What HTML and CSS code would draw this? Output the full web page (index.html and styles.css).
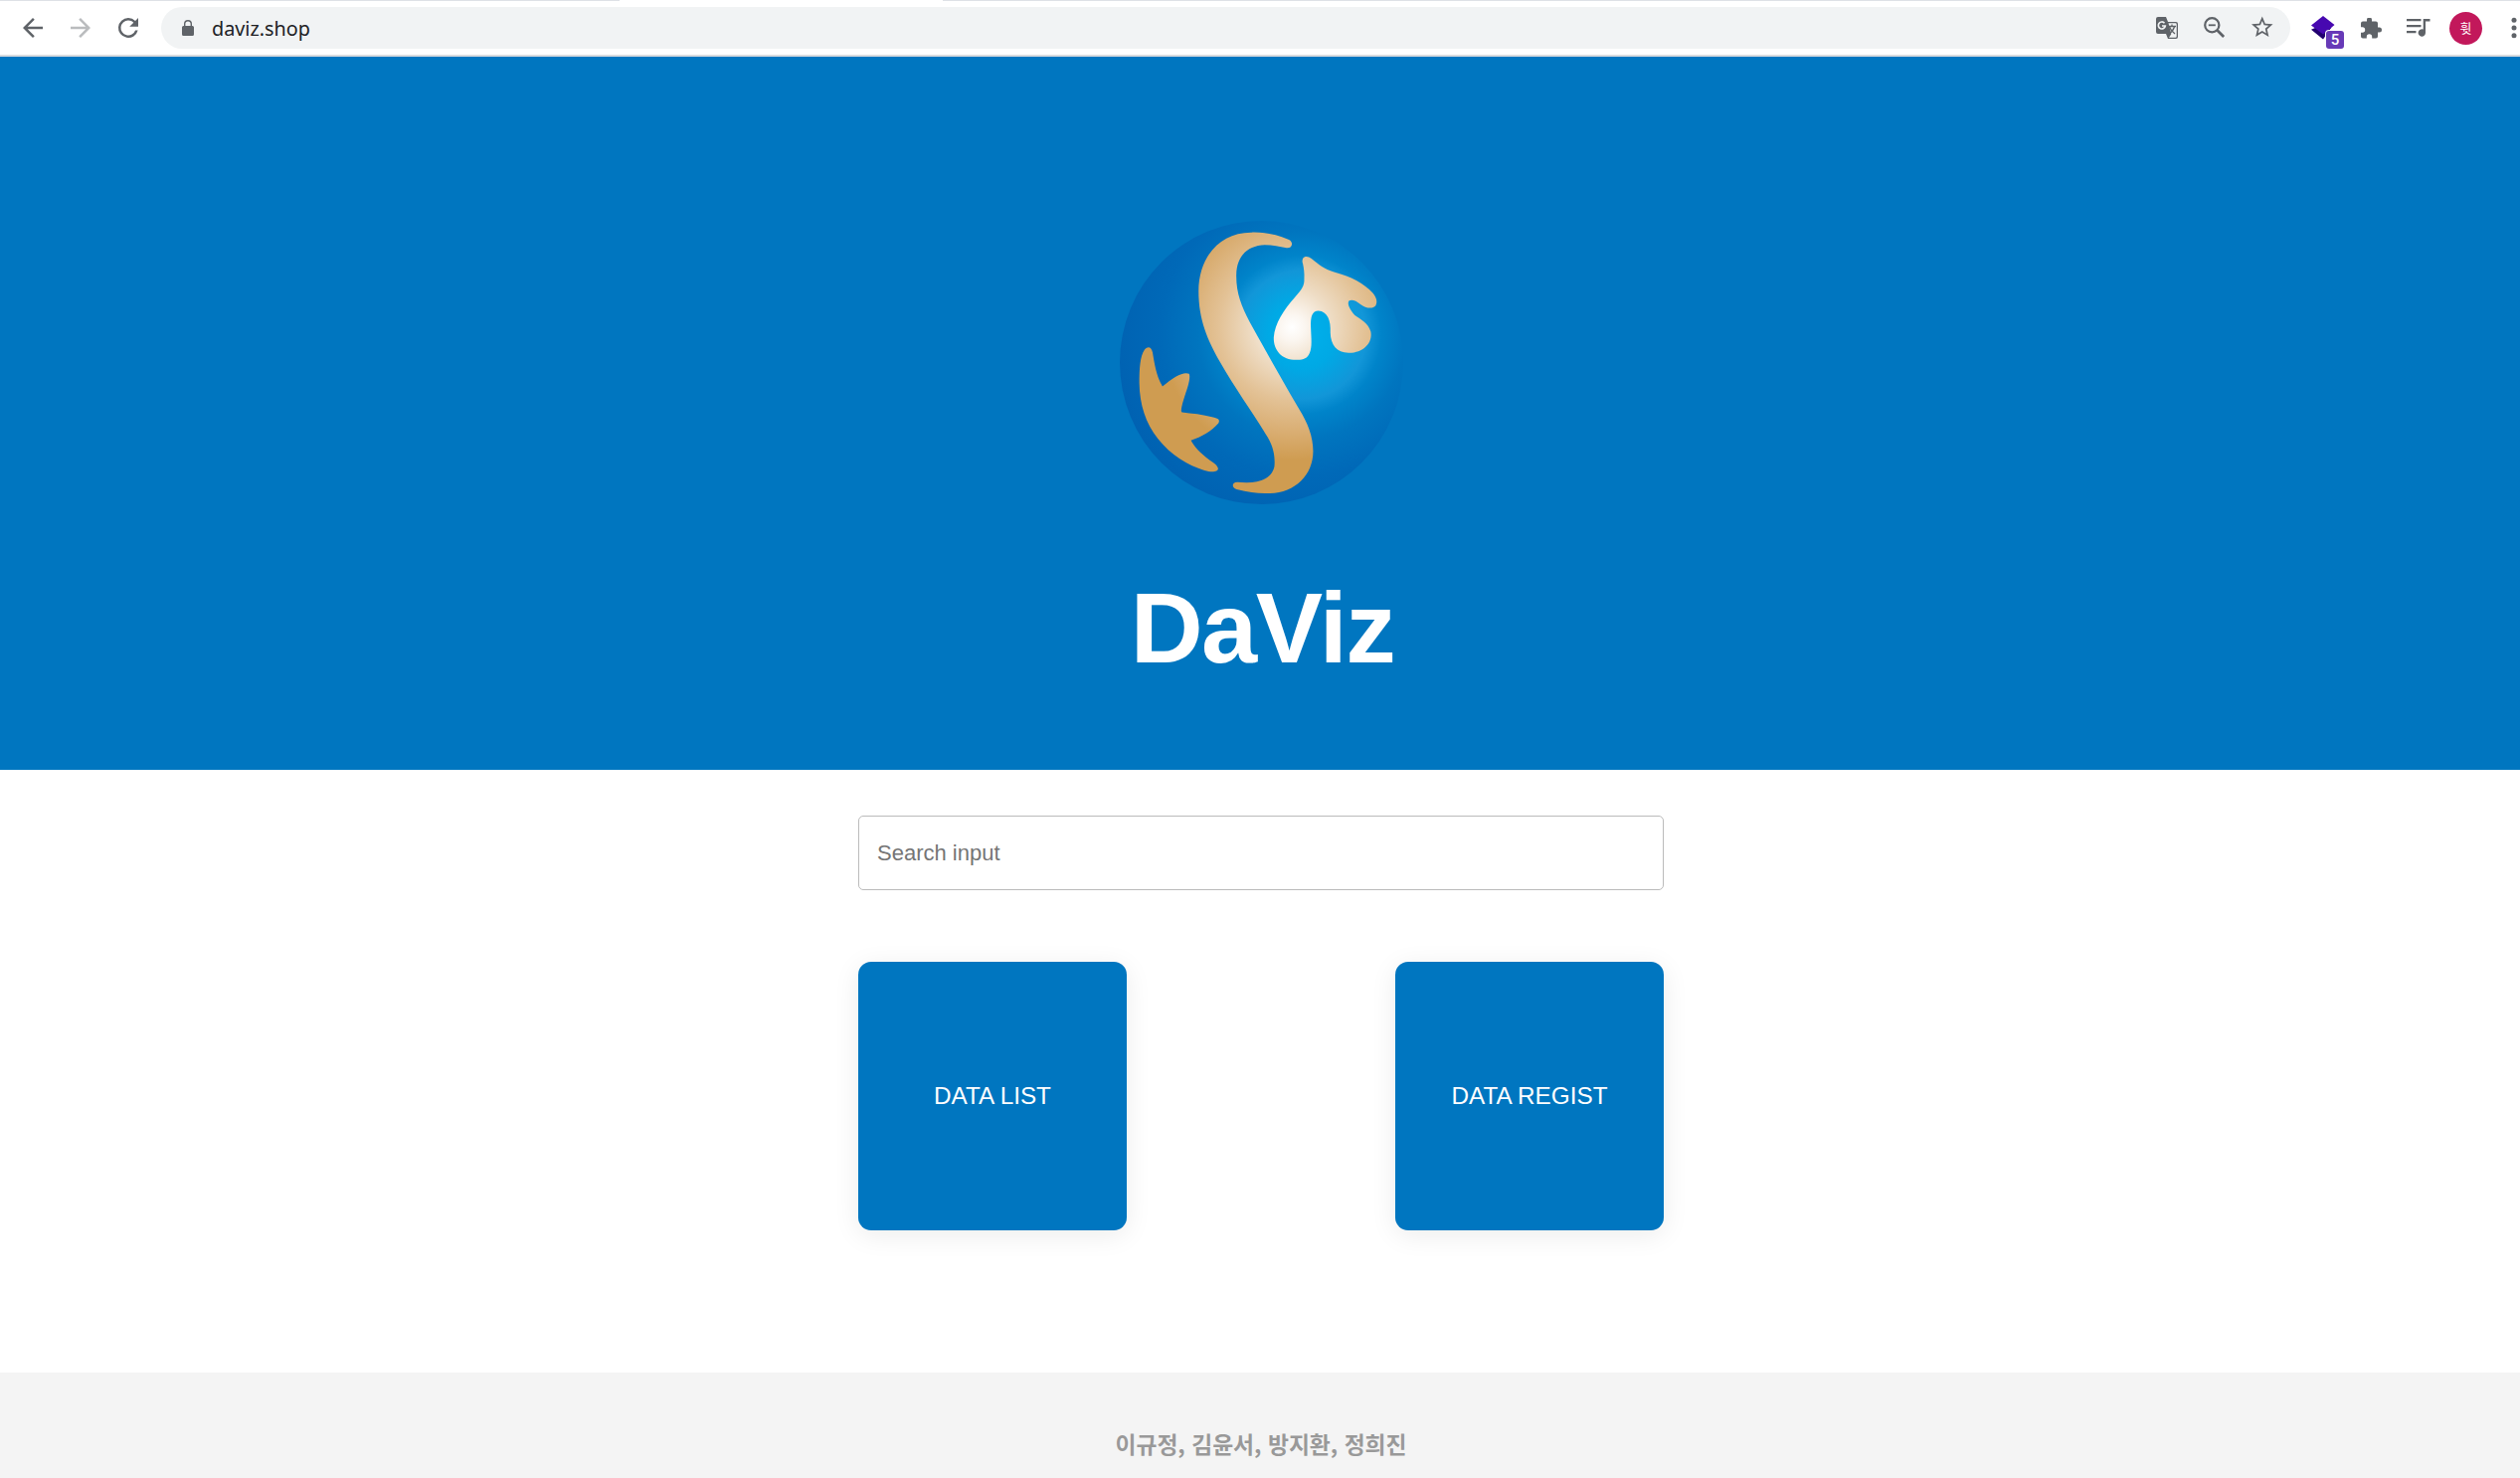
FILE: index.html
```html
<!DOCTYPE html>
<html lang="ko">
<head>
<meta charset="utf-8">
<title>DaViz</title>
<link rel="stylesheet" href="styles.css">
</head>
<body>
<header class="toolbar">
  <svg class="icon" viewBox="0 0 24 24"><path d="M20 11H7.83l5.59-5.59L12 4l-8 8 8 8 1.41-1.41L7.83 13H20z"/></svg>
  <svg class="icon icon-off" viewBox="0 0 24 24"><path d="M12 4l-1.41 1.41L16.17 11H4v2h12.17l-5.58 5.59L12 20l8-8z"/></svg>
  <svg class="icon" viewBox="0 0 24 24"><path d="M17.65 6.35A7.96 7.96 0 0 0 12 4a8 8 0 1 0 7.73 10h-2.08A6 6 0 1 1 12 6c1.66 0 3.14.69 4.22 1.78L13 11h7V4z"/></svg>
  <div class="address">
    <svg class="lock" viewBox="0 0 12 16"><path d="M1.500 6H2V4a4 4 0 0 1 8 0v2h.5Q12 6 12 7.500V14.500Q12 16 10.500 16h-9Q0 16 0 14.500v-7Q0 6 1.500 6zM3.400 6h5.200V4a2.600 2.600 0 0 0-5.200 0z"/></svg>
    <span class="url">daviz.shop</span>
    <svg class="icon" viewBox="0 0 30 30"><path d="M6 4h8l2 5h8q2 0 2 2v13q0 2-2 2h-8l-2-5H6q-2 0-2-2V6q0-2 2-2z"/><path fill="#f1f3f4" d="M16.500 10.300H23.500q1.200 0 1.200 1.200v12q0 1.200-1.200 1.200H17l2.300-3.500z"/><path fill="none" stroke="#f1f3f4" stroke-width="1.700" d="M12.500 10.200a3.500 3.500 0 1 0 .8 2.800H10"/><path fill="none" stroke="#5f6368" stroke-width="1.300" d="M16.500 13.500h7.500M20 11.500v2M17.500 14c1 3 3 5 5.500 7M22.500 14c-1 3-3 5.500-6 7.500"/></svg>
    <svg class="icon" viewBox="0 0 30 30"><g fill="none" stroke="#5f6368"><circle cx="12.300" cy="12.300" r="7.100" stroke-width="2.200"/><path stroke-width="2.800" d="M17.600 17.600l6.500 6.500"/><path stroke-width="1.800" d="M8.800 12.300h7"/></g></svg>
    <svg class="icon" viewBox="0 0 24 24"><path transform="translate(1.500 1.100) scale(.86)" d="M22 9.240l-7.190-.62L12 2 9.190 8.630 2 9.240l5.460 4.730L5.820 21 12 17.270 18.180 21l-1.630-7.030zM12 15.400l-3.760 2.270 1-4.280-3.320-2.880 4.380-.38L12 6.100l1.710 4.040 4.380.38-3.320 2.880 1 4.280z"/></svg>
  </div>
  <div class="ext">
    <svg viewBox="0 0 34 34" width="34" height="34"><path fill="#21006f" d="M1 18.800L5 17l16 0-8 11.500z"/><path fill="#4708b0" d="M13 5L24.500 14 20.500 17.500 13 23.500 1 14.500z"/></svg>
    <span class="count">5</span>
  </div>
  <svg class="puzzle" viewBox="2 1.500 21 21"><path d="M20.500 11H19V7a2 2 0 0 0-2-2h-4V3.500a2.500 2.500 0 0 0-5 0V5H4a2 2 0 0 0-2 2v3.800h1.500a2.700 2.700 0 0 1 0 5.400H2V20a2 2 0 0 0 2 2h3.800v-1.500a2.700 2.700 0 0 1 5.400 0V22H17a2 2 0 0 0 2-2v-4h1.500a2.500 2.500 0 0 0 0-5z"/></svg>
  <svg class="queue" viewBox="0 0 24 20"><path d="M0 1h14.500v2.300H0zM0 7h14.500v2.300H0zM0 13h9.500v2.300H0zM16.700 1H23.500v2.500H19V15a3.700 3.700 0 1 1-2.300-3.400z"/></svg>
  <span class="avatar">휫</span>
  <svg class="dots" viewBox="0 0 6 22"><circle cx="3" cy="3.200" r="2.500"/><circle cx="3" cy="11" r="2.500"/><circle cx="3" cy="18.800" r="2.500"/></svg>
</header>
<section class="hero">
  <svg class="logo" viewBox="48 50 856 856">
    <defs>
      <radialGradient id="ball" gradientUnits="userSpaceOnUse" cx="598" cy="394" r="570">
        <stop offset="0" stop-color="#00b1ec"/><stop offset=".18" stop-color="#00a9e5"/><stop offset=".34" stop-color="#1296d8"/><stop offset=".42" stop-color="#0084ca"/><stop offset=".55" stop-color="#0075bf"/><stop offset=".75" stop-color="#0069b8"/><stop offset="1" stop-color="#0062b2"/>
      </radialGradient>
      <radialGradient id="gold" gradientUnits="userSpaceOnUse" cx="568" cy="372" r="400">
        <stop offset="0" stop-color="#fff"/><stop offset=".1" stop-color="#fbf6f0"/><stop offset=".3" stop-color="#eedcc4"/><stop offset=".55" stop-color="#e3c296"/><stop offset=".8" stop-color="#d9ad71"/><stop offset="1" stop-color="#cf9c51"/>
      </radialGradient>
    </defs>
    <circle cx="476" cy="478" r="428" fill="url(#ball)"/>
    <g fill="url(#gold)">
      <path d="M557 106C520 91 485 84 446 85C350 84 286 160 286 262C286 350 314 412 350 475C400 562 450 630 495 704C515 738 517 770 515 792C507 827 473 846 403 839C386 839 385 857 401 861C440 871 470 874 502 873C578 871 632 817 632 746C632 700 615 660 590 619C540 535 490 445 440 355C415 308 399 267 400 213C401 157 433 125 486 123C510 123 530 128 552 132C570 134 574 112 557 106Z"/>
      <path d="M601 180C594 158 612 152 627 164C650 183 665 195 695 205C750 220 785 240 812 268C824 282 827 296 821 306C811 318 790 313 775 302C761 290 747 286 740 292C734 300 743 320 758 335C775 348 799 357 806 385C813 421 780 450 739 449C703 448 685 425 684 388C686 350 675 324 648 322C629 322 624 340 625 371C626 405 630 429 621 450C615 465 601 471 581 470C537 470 512 441 513 402C516 360 544 318 576 282C598 258 606 246 605 226C606 207 604 195 601 180Z"/>
      <path d="M147 447C143 430 133 428 123 439C109 458 107 498 107 540C108 605 126 660 163 708C201 757 255 789 304 804C327 811 345 808 345 798C344 789 332 781 320 773C290 751 272 731 263 713C295 702 326 684 346 661C352 651 345 646 330 643C298 634 265 632 236 628C230 626 237 600 247 570C257 545 262 518 257 512C242 504 212 520 177 550C157 516 153 480 147 447Z"/>
    </g>
  </svg>
  <h1 class="title">DaViz</h1>
</section>
<main class="content">
  <input class="search" type="text" placeholder="Search input">
  <nav class="cards">
    <a class="card">DATA LIST</a>
    <a class="card">DATA REGIST</a>
  </nav>
</main>
<footer class="footer">이규정, 김윤서, 방지환, 정희진</footer>
</body>
</html>
```
FILE: styles.css
```css
* { box-sizing: border-box; }
body {
  margin: 0;
  height: 1486px;
  overflow: hidden;
  display: flex;
  flex-direction: column;
  background: #fff;
  font-family: "Liberation Sans", "Noto Sans CJK KR", sans-serif;
}
svg { display: block; flex: none; }

.toolbar {
  flex: none;
  height: 57px;
  padding: 1px 0 0 18px;
  display: flex;
  align-items: center;
  border-bottom: 2px solid #d9dbdf;
  background: linear-gradient(90deg, #dee1e6 623px, #fff 623px 948px, #dee1e6 948px) 0 0 / 100% 1px no-repeat;
  fill: #5f6368;
}
.icon { width: 30px; height: 30px; margin-right: 18px; }
.icon-off { fill: #babcbe; }
.address {
  width: 2141px;
  height: 42px;
  padding-left: 21px;
  display: flex;
  align-items: center;
  border-radius: 21px;
  background: #f1f3f4;
}
.address .icon:last-child { margin-right: 13px; }
.lock { width: 12px; height: 16px; }
.url {
  flex: 1;
  margin: 2px 0 0 18px;
  color: #202124;
  font: 19.8px/28px "Noto Sans", sans-serif;
}
.ext { position: relative; width: 34px; height: 34px; margin: 0 17px 0 20px; }
.count {
  position: absolute;
  left: 16px;
  top: 20px;
  width: 18px;
  height: 18px;
  border-radius: 3px;
  background: #673ab7;
  box-shadow: 0 0 0 1px #fff;
  color: #fff;
  text-align: center;
  font: 500 15px/18px Roboto, sans-serif;
}
.puzzle { width: 21px; height: 21px; margin-right: 25px; }
.queue { width: 24px; height: 20px; margin-right: 19px; }
.avatar {
  flex: none;
  width: 33px;
  height: 33px;
  border-radius: 50%;
  background: #c2185b;
  color: #fff;
  text-align: center;
  font: 13px/32px "Noto Sans CJK KR", sans-serif;
}
.dots { width: 6px; height: 22px; margin-left: 29px; }

.hero {
  flex: none;
  height: 717px;
  padding: 165px 0 0 2px;
  display: flex;
  flex-direction: column;
  align-items: center;
  background: #0076c0;
}
.logo { width: 285px; height: 285px; }
.title {
  margin: 66px 0 0 3px;
  color: #fff;
  font-size: 101px;
  line-height: 116px;
  letter-spacing: -1.5px;
}

.content {
  flex: none;
  width: 812px;
  height: 606px;
  margin: 0 auto;
  padding: 46px 0 0 2px;
}
.search {
  display: block;
  width: 810px;
  height: 75px;
  padding: 0 18px;
  border: 1px solid #bbb;
  border-radius: 5px;
  outline: 0;
  font: 22px "Liberation Sans", sans-serif;
}
.search::placeholder { color: #757575; }
.cards { margin-top: 72px; display: flex; justify-content: space-between; }
.card {
  width: 270px;
  height: 270px;
  display: flex;
  align-items: center;
  justify-content: center;
  border-radius: 13px;
  background: #0076c0;
  box-shadow: 0 5px 27px rgba(0, 20, 10, .08);
  color: #fff;
  font-size: 24.3px;
}
.footer {
  flex: 1;
  padding: 54px 0 0 2px;
  background: #f4f4f4;
  color: #999;
  text-align: center;
  font: 700 22.8px/36px "Noto Sans CJK KR", sans-serif;
}
```
